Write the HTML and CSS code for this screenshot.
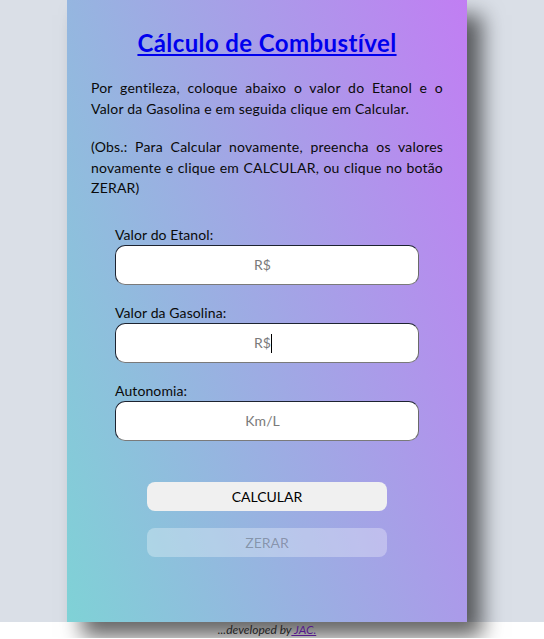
FILE: index.html
```html
<!DOCTYPE html>
<html lang="pt-BR">
<head>
<meta charset="utf-8">
<title>Cálculo de Combustível</title>
<link rel="stylesheet" href="styles.css">
</head>
<body>
<div class="page">
  <main class="card">
    <h1 class="title"><a href="#">Cálculo de Combustível</a></h1>
    <p class="text">Por gentileza, coloque abaixo o valor do Etanol e o Valor da Gasolina e em seguida clique em Calcular.</p>
    <p class="text">(Obs.: Para Calcular novamente, preencha os valores novamente e clique em CALCULAR, ou clique no botão ZERAR)</p>
    <form class="form">
      <div class="field">
        <label class="label" for="etanol">Valor do Etanol:</label>
        <input class="input" id="etanol" type="text" placeholder="R$">
      </div>
      <div class="field">
        <label class="label" for="gasolina">Valor da Gasolina:</label>
        <div class="input-wrap">
          <input class="input" id="gasolina" type="text" placeholder="R$">
          <span class="caret"></span>
        </div>
      </div>
      <div class="field">
        <label class="label" for="autonomia">Autonomia:</label>
        <input class="input" id="autonomia" type="text" placeholder="Km/L">
      </div>
      <div class="actions">
        <button class="btn" type="button">CALCULAR</button>
        <button class="btn" type="button" disabled>ZERAR</button>
      </div>
    </form>
  </main>
</div>
<footer class="footer">...developed by<a href="#"> JAC.</a></footer>
</body>
</html>
```
FILE: styles.css
```css
* { box-sizing: border-box; }
html { background: #ffffff; }
body {
  margin: 0;
  font-family: Lato, "Noto Sans", sans-serif;
  color: #0a0a0a;
}
.page {
  background: #dadfe7;
  display: flex;
  justify-content: center;
  padding-right: 10px;
}
.card {
  width: 400px;
  height: 622px;
  padding: 28px 24px 0;
  background: linear-gradient(72deg, #7fd2d6, #c17ef3);
  box-shadow: 15px 15px 20px rgba(0, 0, 0, 0.6);
}
.title {
  margin: 0;
  text-align: center;
  font-size: 24px;
  line-height: 30px;
  font-weight: 700;
  letter-spacing: 0.4px;
}
.title a { color: #0000ee; text-decoration: underline; }
.text {
  margin: 20px 0 0;
  font-size: 14px;
  line-height: 20.5px;
  text-align: justify;
  letter-spacing: 0.2px;
}
.text + .text { margin-top: 18px; }
.form {
  width: 304px;
  margin: 27px auto 0;
  display: flex;
  flex-direction: column;
}
.field {
  display: flex;
  flex-direction: column;
  gap: 1px;
}
.field + .field { margin-top: 19px; }
.label { font-size: 14px; line-height: 18px; letter-spacing: 0.1px; }
.input-wrap { position: relative; display: flex; }
.caret {
  position: absolute;
  left: 156px;
  top: 11px;
  width: 1px;
  height: 19px;
  background: #000;
}
.input {
  height: 40px;
  width: 100%;
  padding: 0 9px 0 0;
  border-radius: 10px;
  border: 1px solid;
  border-color: #1d2330 #6a6a6a #7a7a7a #1d2330;
  background: #ffffff;
  text-align: center;
  font-family: inherit;
  font-size: 14px;
  color: #000;
  outline: none;
}
.input::placeholder { color: #7a7a7a; }
.actions {
  display: flex;
  flex-direction: column;
  align-items: center;
  gap: 17px;
  margin-top: 41px;
}
.btn {
  width: 240px;
  height: 29px;
  border: 0;
  border-radius: 8px;
  font-family: inherit;
  font-size: 14px;
  background: #f0f0f0;
  color: #000;
}
.btn:disabled {
  background: rgba(255, 255, 255, 0.3);
  color: rgba(16, 16, 16, 0.3);
}
.footer {
  padding-right: 10px;
  text-align: center;
  font-size: 12px;
  font-style: italic;
  line-height: 16px;
  color: #222;
}
.footer a { color: #551a8b; }
```
